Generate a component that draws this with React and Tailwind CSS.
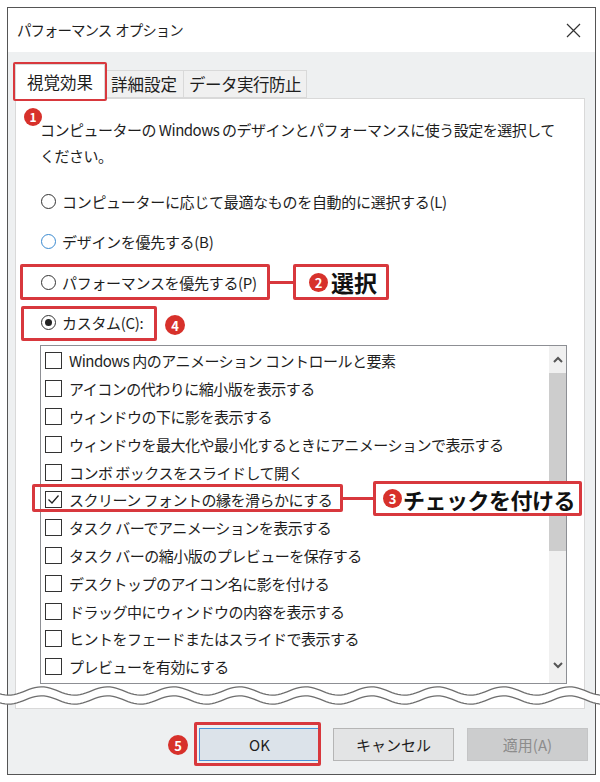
const items = [
  "Windows 内のアニメーション コントロールと要素",
  "アイコンの代わりに縮小版を表示する",
  "ウィンドウの下に影を表示する",
  "ウィンドウを最大化や最小化するときにアニメーションで表示する",
  "コンボ ボックスをスライドして開く",
  "スクリーン フォントの縁を滑らかにする",
  "タスク バーでアニメーションを表示する",
  "タスク バーの縮小版のプレビューを保存する",
  "デスクトップのアイコン名に影を付ける",
  "ドラッグ中にウィンドウの内容を表示する",
  "ヒントをフェードまたはスライドで表示する",
  "プレビューを有効にする",
];

const radios = [
  { label: "コンピューターに応じて最適なものを自動的に選択する(L)", state: "off" },
  { label: "デザインを優先する(B)", state: "hover" },
  { label: "パフォーマンスを優先する(P)", state: "off" },
  { label: "カスタム(C):", state: "on" },
];

// torn-paper break across the dialog
const wavePoints = (base) => {
  const pts = [];
  for (let x = -4; x <= 604; x += 3) {
    pts.push([x, base + 4.2 * Math.sin(((x + 8) / 66) * 2 * Math.PI)]);
  }
  return pts;
};
const upper = wavePoints(11);
const lower = wavePoints(20);
const toPath = (pts) => pts.map((p, i) => `${i ? "L" : "M"}${p[0]} ${p[1].toFixed(2)}`).join(" ");
const fillPath = toPath(upper) + " " + [...lower].reverse().map((p) => `L${p[0]} ${p[1].toFixed(2)}`).join(" ") + " Z";

const Badge = ({ n, className }) => (
  <div
    className={`absolute flex items-center justify-center rounded-full bg-[#d7312b] text-[12px] font-bold leading-none text-white ${className}`}
  >
    {n}
  </div>
);

const Radio = ({ state }) => (
  <span
    className={`flex h-[15px] w-[15px] items-center justify-center rounded-full border bg-white ${
      state === "hover" ? "border-[#3a8ad0]" : "border-[#333]"
    }`}
  >
    {state === "on" && <span className="h-[7px] w-[7px] rounded-full bg-[#222]" />}
  </span>
);

const Chevron = ({ down }) => (
  <svg width="10" height="7" viewBox="0 0 10 7" className={down ? "rotate-180" : ""}>
    <polyline points="1,6 5,2 9,6" fill="none" stroke="#555" strokeWidth="2" />
  </svg>
);

export default function App() {
  return (
    <div className="relative h-[782px] w-[600px] overflow-hidden bg-white pl-[7px] pt-[7px] font-['Noto_Sans_CJK_JP',sans-serif] text-[#1e1e1e]">
      <div className="flex h-[768px] w-[589px] flex-col border border-[#555] bg-[#eef0f1]">
        {/* title bar */}
        <div className="flex h-[44px] items-center justify-between bg-white pl-[9px] pr-[14px]">
          <span className="flex gap-[4px] text-[14.5px] leading-none tracking-[-1px]">
            <span>パフォーマンス</span>
            <span>オプション</span>
          </span>
          <svg width="15" height="15" viewBox="0 0 15 15">
            <path d="M1 1L14 14M14 1L1 14" stroke="#333" strokeWidth="1.2" />
          </svg>
        </div>

        {/* tabs */}
        <div className="ml-[7px] flex h-[46px] items-end text-[16.5px] leading-none">
          <div className="relative z-10 -mb-px flex h-[35px] w-[90px] items-center justify-center border border-b-0 border-[#d9d9d9] bg-white">
            視覚効果
          </div>
          <div className="flex h-[28px] w-[79px] items-center justify-center border border-l-0 border-[#d9d9d9] bg-[#f0f0f0]">
            詳細設定
          </div>
          <div className="flex h-[28px] w-[123px] items-center justify-center border border-l-0 border-[#d9d9d9] bg-[#f0f0f0] tracking-[-0.5px]">
            データ実行防止
          </div>
        </div>

        {/* panel */}
        <div className="ml-[7px] mr-[10px] h-[611px] border border-[#d9d9d9] bg-white pl-[24px] pt-[18px]">
          <p className="text-[15px] leading-[26px] tracking-[-0.5px]">
            コンピューターの Windows のデザインとパフォーマンスに使う設定を選択して
            <br />
            ください。
          </p>

          <div className="mt-[12px]">
            {radios.map((r) => (
              <div key={r.label} className="flex h-[40.5px] items-center gap-[6px] pl-[1px]">
                <Radio state={r.state} />
                <span className="text-[15px] leading-none tracking-[-0.3px]">{r.label}</span>
              </div>
            ))}
          </div>

          <div className="mt-[2px] flex h-[339px] w-[527px] border border-[#8d8f94]">
            <div className="flex-1 pt-[1px]">
              {items.map((t, i) => (
                <div key={t} className="flex h-[27.8px] items-center gap-[7px] pl-[4px]">
                  <span className="flex h-[17px] w-[17px] items-center justify-center border border-[#333] bg-white">
                    {i === 5 && (
                      <svg width="13" height="11" viewBox="0 0 13 11">
                        <polyline points="1.5,5.5 5,9 11.5,1.5" fill="none" stroke="#222" strokeWidth="1.3" />
                      </svg>
                    )}
                  </span>
                  <span className="text-[15px] leading-none tracking-[-0.5px]">{t}</span>
                </div>
              ))}
            </div>
            <div className="flex w-[17px] flex-col bg-[#f0f0f0]">
              <div className="flex h-[26px] items-center justify-center">
                <Chevron />
              </div>
              <div className="mt-[1px] h-[178px] bg-[#cdcdcd]" />
              <div className="flex-1" />
              <div className="flex h-[31px] items-start justify-center pt-[10px]">
                <Chevron down />
              </div>
            </div>
          </div>
        </div>

        {/* buttons */}
        <div className="flex justify-end gap-[13px] pr-[7px] pt-[19px] text-[15px] leading-none">
          <button className="h-[33px] w-[121px] border border-[#4a8fd6] bg-[#dce3ea]">OK</button>
          <button className="h-[33px] w-[121px] border border-[#b5b5b5] bg-[#e3e4e5]">キャンセル</button>
          <button className="h-[33px] w-[121px] border border-[#c4c5c6] bg-[#cccdce] text-[#8c8c8c]">適用(A)</button>
        </div>
      </div>

      {/* paper break */}
      <svg className="absolute left-0 top-[680px]" width="600" height="32" viewBox="0 0 600 32">
        <path d={fillPath} fill="#fff" />
        <path d={toPath(upper)} fill="none" stroke="#6e6e6e" strokeWidth="1.3" />
        <path d={toPath(lower)} fill="none" stroke="#6e6e6e" strokeWidth="1.3" />
      </svg>

      {/* annotations */}
      <div className="absolute left-[13px] top-[62px] h-[39px] w-[94px] rounded-[2px] border-[3px] border-[#d8383d]" />
      <Badge n="1" className="left-[24px] top-[108px] h-[18px] w-[18px]" />

      <div className="absolute left-[20px] top-[264px] h-[36px] w-[250px] rounded-[2px] border-[3px] border-[#d8383d]" />
      <div className="absolute left-[269px] top-[281px] h-[3px] w-[25px] bg-[#d8383d]" />
      <div className="absolute left-[293px] top-[264px] flex h-[36px] w-[96px] items-center gap-[3px] rounded-[2px] border-[3px] border-[#d8383d] bg-white pl-[13px]">
        <span className="flex h-[19px] w-[19px] items-center justify-center rounded-full bg-[#d7312b] text-[13px] font-bold leading-none text-white">
          2
        </span>
        <span className="text-[23px] font-bold leading-none text-[#111]">選択</span>
      </div>

      <div className="absolute left-[21px] top-[306px] h-[35px] w-[136px] rounded-[2px] border-[3px] border-[#d8383d]" />
      <Badge n="4" className="left-[165px] top-[315px] h-[20px] w-[20px] text-[13px]" />

      <div className="absolute left-[32px] top-[484px] h-[28px] w-[311px] rounded-[2px] border-[3px] border-[#d8383d]" />
      <div className="absolute left-[342px] top-[497px] h-[3px] w-[32px] bg-[#d8383d]" />
      <div className="absolute left-[373px] top-[481px] flex h-[35px] w-[209px] items-center gap-[1px] rounded-[2px] border-[3px] border-[#d8383d] bg-white pl-[7px]">
        <span className="flex h-[19px] w-[19px] items-center justify-center rounded-full bg-[#d7312b] text-[13px] font-bold leading-none text-white">
          3
        </span>
        <span className="text-[22px] font-bold leading-none tracking-[-0.5px] text-[#111]">チェックを付ける</span>
      </div>

      <Badge n="5" className="left-[168px] top-[735px] h-[20px] w-[20px] text-[13px]" />
      <div className="absolute left-[194px] top-[722px] h-[44px] w-[127px] rounded-[2px] border-[3px] border-[#d8383d]" />
    </div>
  );
}
